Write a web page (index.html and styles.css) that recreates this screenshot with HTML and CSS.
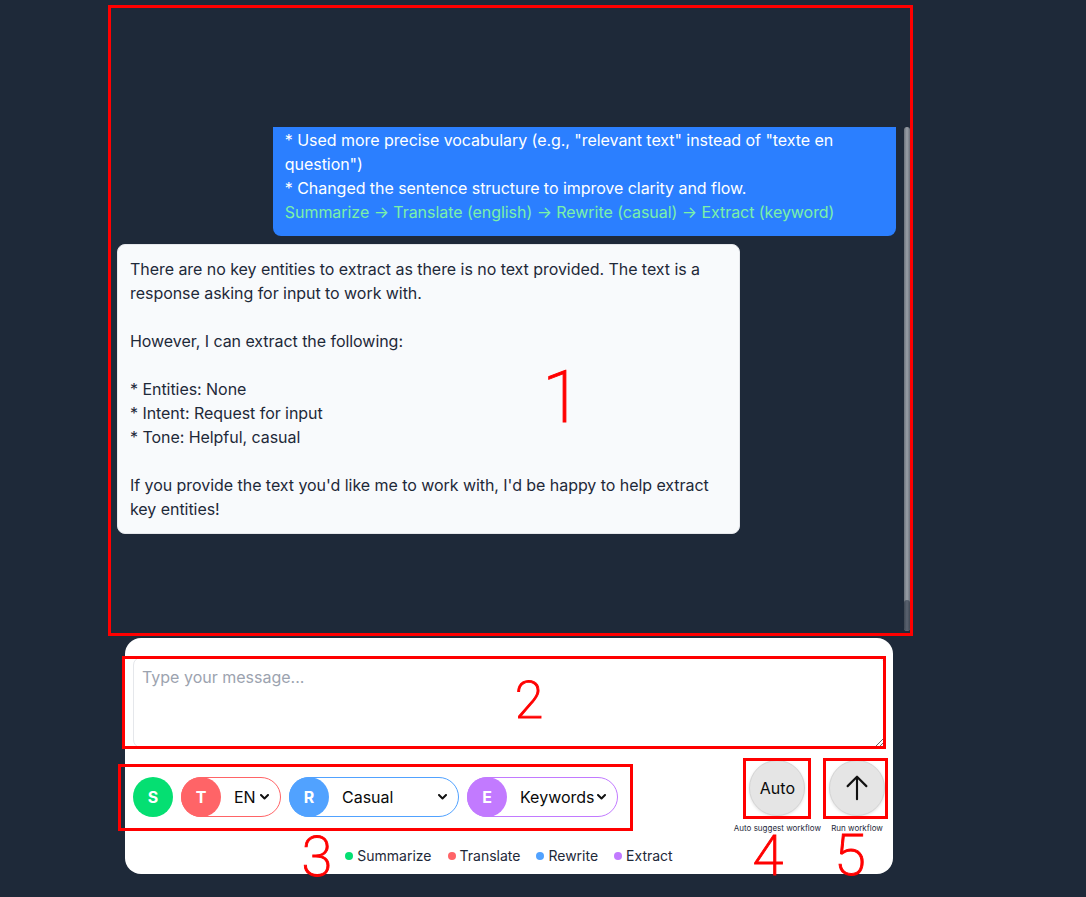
FILE: index.html
```html
<!DOCTYPE html>
<html lang="en">
<head>
<meta charset="utf-8">
<title>Workflow chat</title>
<link rel="stylesheet" href="styles.css">
</head>
<body>
<div class="page">
  <section class="chat">
    <div class="chat-scroll">
      <div class="chat-inner">
        <div class="msg msg-user">
          * Used more precise vocabulary (e.g., "relevant text" instead of "texte en question")<br>
          * Changed the sentence structure to improve clarity and flow.<br>
          <span class="flow">Summarize → Translate (english) → Rewrite (casual) → Extract (keyword)</span>
        </div>
        <div class="msg msg-bot">
          There are no key entities to extract as there is no text provided. The text is a response asking for input to work with.<br>
          <br>
          However, I can extract the following:<br>
          <br>
          * Entities: None<br>
          * Intent: Request for input<br>
          * Tone: Helpful, casual<br>
          <br>
          If you provide the text you'd like me to work with, I'd be happy to help extract key entities!
        </div>
      </div>
    </div>
    <div class="scrollbar"><div class="scrollbar-thumb"></div></div>
  </section>

  <section class="composer">
    <textarea class="input" placeholder="Type your message..."></textarea>
    <div class="controls">
      <div class="steps">
        <span class="badge badge-s">S</span>
        <div class="pill pill-t">
          <span class="badge badge-t">T</span>
          <select class="pill-select"><option>EN</option><option>FR</option><option>ES</option></select>
          <svg class="chev" width="9" height="6" viewBox="0 0 9 6"><path d="M1 1l3.5 3.5L8 1" fill="none" stroke="#111" stroke-width="2" stroke-linecap="round" stroke-linejoin="round"/></svg>
        </div>
        <div class="pill pill-r">
          <span class="badge badge-r">R</span>
          <select class="pill-select"><option>Casual</option><option>Formal</option><option>Professional</option></select>
          <svg class="chev" width="9" height="6" viewBox="0 0 9 6"><path d="M1 1l3.5 3.5L8 1" fill="none" stroke="#111" stroke-width="2" stroke-linecap="round" stroke-linejoin="round"/></svg>
        </div>
        <div class="pill pill-e">
          <span class="badge badge-e">E</span>
          <select class="pill-select"><option>Keywords</option><option>Entities</option></select>
          <svg class="chev" width="9" height="6" viewBox="0 0 9 6"><path d="M1 1l3.5 3.5L8 1" fill="none" stroke="#111" stroke-width="2" stroke-linecap="round" stroke-linejoin="round"/></svg>
        </div>
      </div>
      <div class="actions">
        <div class="action">
          <button class="round-btn">Auto</button>
          <span class="caption">Auto suggest workflow</span>
        </div>
        <div class="action">
          <button class="round-btn" aria-label="Run workflow">
            <svg width="30" height="30" viewBox="0 0 24 24" fill="none" stroke="#111" stroke-width="1.7" stroke-linecap="round" stroke-linejoin="round"><path d="M4.5 10.5 12 3m0 0 7.5 7.5M12 3v18"/></svg>
          </button>
          <span class="caption">Run workflow</span>
        </div>
      </div>
    </div>
    <div class="legend">
      <span class="legend-item"><i class="dot dot-s"></i>Summarize</span>
      <span class="legend-item"><i class="dot dot-t"></i>Translate</span>
      <span class="legend-item"><i class="dot dot-r"></i>Rewrite</span>
      <span class="legend-item"><i class="dot dot-e"></i>Extract</span>
    </div>
  </section>
</div>

<div class="annotations">
  <div class="box box-1"></div>
  <div class="box box-2"></div>
  <div class="box box-3"></div>
  <div class="box box-4"></div>
  <div class="box box-5"></div>
  <span class="num num-1">1</span>
  <span class="num num-2">2</span>
  <span class="num num-3">3</span>
  <span class="num num-4">4</span>
  <span class="num num-5">5</span>
</div>
</body>
</html>
```

FILE: styles.css
```css
* { box-sizing: border-box; }

html, body {
  margin: 0;
  height: 100%;
  overflow: hidden;
}

body {
  background: #1e2939;
  font-family: Inter, "Liberation Sans", sans-serif;
  color: #1e2939;
}

.page {
  width: 797px;
  margin-left: 113px;
  padding-top: 127px;
}

/* chat history */
.chat {
  height: 504px;
  display: flex;
}

.chat-scroll {
  flex: 1;
  min-width: 0;
  overflow: hidden;
  display: flex;
  flex-direction: column-reverse;
  padding: 0 8px 0 4px;
}

.chat-inner {
  display: flex;
  flex-direction: column;
  gap: 8px;
  padding-bottom: 97px;
}

.scrollbar {
  width: 6px;
  flex: none;
  display: flex;
  flex-direction: column;
  justify-content: flex-end;
  background: linear-gradient(90deg, #6b717b, #9aa0a8 50%, #6b717b);
  border-radius: 3px;
}

.scrollbar-thumb {
  height: 31px;
  border-radius: 3px;
  background: linear-gradient(90deg, #3f4753, #5b6370 50%, #3f4753);
}

.msg {
  max-width: 80%;
  font-size: 16px;
  line-height: 24px;
  letter-spacing: -0.05px;
  padding: 12px;
  border-radius: 8px;
}

.msg-user {
  align-self: flex-end;
  background: #2b7fff;
  color: #fff;
}

.flow { color: #7bf1a8; }

.msg-bot {
  align-self: flex-start;
  background: #f8fafc;
  border: 1px solid #e5e7eb;
  color: #1e2939;
}

/* composer */
.composer {
  width: 768px;
  margin: 7px 0 0 12px;
  background: #fff;
  border-radius: 16px;
  padding: 19px 8px 8px 8px;
}

.input {
  display: block;
  width: 100%;
  height: 91px;
  border: 1px solid #e5e7eb;
  border-radius: 8px;
  padding: 9px 8px;
  font: 16px/20px Inter, "Liberation Sans", sans-serif;
  color: #1e2939;
  outline: none;
}

.input::placeholder { color: #9ca3af; }

.controls {
  margin-top: 12px;
  display: flex;
  align-items: center;
  justify-content: space-between;
}

.steps {
  display: flex;
  align-items: center;
  gap: 8px;
}

.badge {
  width: 40px;
  height: 40px;
  border-radius: 50%;
  flex: none;
  display: flex;
  align-items: center;
  justify-content: center;
  color: #fff;
  font-weight: 700;
  font-size: 16px;
}

.badge-s { background: #05df72; }
.badge-t { background: #ff6467; }
.badge-r { background: #51a2ff; }
.badge-e { background: #c27aff; }

.pill {
  display: flex;
  align-items: center;
  height: 40px;
  border: 1px solid;
  border-radius: 999px;
  padding-right: 11px;
}

.pill .badge { margin: -1px 0 -1px -1px; }

.pill-t { width: 100px; border-color: #ff6467; }
.pill-r { width: 170px; border-color: #51a2ff; }
.pill-e { width: 151px; border-color: #c27aff; }

.pill-select {
  appearance: none;
  -webkit-appearance: none;
  border: none;
  background: transparent;
  font: 16px/20px Inter, "Liberation Sans", sans-serif;
  color: #0a0a0a;
  padding: 0;
  margin-left: 13px;
  flex: 1;
  min-width: 0;
  outline: none;
}

.chev { flex: none; }

.actions {
  display: flex;
  gap: 8px;
}

.action {
  display: flex;
  flex-direction: column;
  align-items: center;
}

.round-btn {
  width: 56px;
  height: 56px;
  border-radius: 50%;
  border: 1px solid #d4d4d4;
  background: #e5e5e5;
  box-shadow: 0 1px 3px rgba(0, 0, 0, 0.12);
  font: 16px Inter, "Liberation Sans", sans-serif;
  color: #0a0a0a;
  display: flex;
  align-items: center;
  justify-content: center;
  padding: 0;
}

.caption {
  margin-top: 6px;
  font-size: 8px;
  line-height: 12px;
  color: #1e2939;
  white-space: nowrap;
}

.legend {
  margin-top: 12px;
  display: flex;
  justify-content: center;
  gap: 16px;
  font-size: 14px;
  line-height: 20px;
  color: #1e2939;
}

.legend-item {
  display: flex;
  align-items: center;
  gap: 4px;
}

.dot {
  width: 8px;
  height: 8px;
  border-radius: 50%;
  display: inline-block;
}

.dot-s { background: #05df72; }
.dot-t { background: #ff6467; }
.dot-r { background: #51a2ff; }
.dot-e { background: #c27aff; }

/* annotation overlay */
.annotations {
  position: absolute;
  inset: 0;
  pointer-events: none;
}

.box {
  position: absolute;
  border: 3px solid #ff0000;
}

.box-1 { left: 108px; top: 5px; width: 805px; height: 631px; }
.box-2 { left: 122px; top: 656px; width: 764px; height: 93px; }
.box-3 { left: 118px; top: 764px; width: 515px; height: 67px; }
.box-4 { left: 743px; top: 758px; width: 68px; height: 61px; }
.box-5 { left: 823px; top: 758px; width: 65px; height: 61px; }

.num {
  position: absolute;
  color: #ff0000;
  font-family: Roboto, "DejaVu Sans", sans-serif;
  font-weight: 200;
  -webkit-text-stroke: 0.9px #ff0000;
  line-height: 0.7;
  transform: translate(-50%, -50%);
}

.num-1 { left: 562px; top: 398px; font-size: 72px; }
.num-2 { left: 529px; top: 701px; font-size: 52px; }
.num-3 { left: 317px; top: 858px; font-size: 56px; }
.num-4 { left: 768px; top: 857px; font-size: 56px; }
.num-5 { left: 850px; top: 855px; font-size: 58px; }
```
